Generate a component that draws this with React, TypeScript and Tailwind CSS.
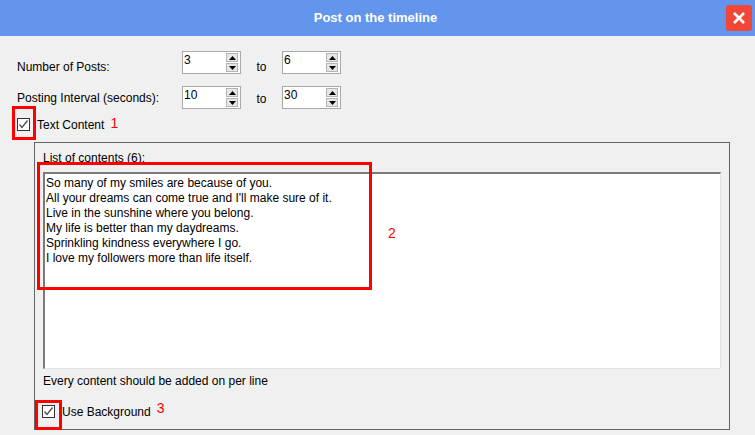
import React from "react"

const font = { fontFamily: '"Liberation Sans", Arial, sans-serif' }

const lines = [
  "So many of my smiles are because of you.",
  "All your dreams can come true and I'll make sure of it.",
  "Live in the sunshine where you belong.",
  "My life is better than my daydreams.",
  "Sprinkling kindness everywhere I go.",
  "I love my followers more than life itself.",
]

function SpinBox({ value }: { value: string }) {
  return (
    <div className="flex h-[23px] w-[59px] items-stretch border border-[#a9a9a9] bg-white">
      <div className="flex-1 pl-[1px] text-[12px] leading-[16px] text-black">{value}</div>
      <div className="flex flex-col gap-[1px] py-[1px] pr-[2px]">
        <div className="flex h-[9px] w-[12px] items-center justify-center border border-[#b5b5b5] bg-[#e6e6e6]">
          <svg width="7" height="4" viewBox="0 0 7 4">
            <path d="M3.5 0 L7 4 L0 4 Z" fill="#000" />
          </svg>
        </div>
        <div className="flex h-[9px] w-[12px] items-center justify-center border border-[#b5b5b5] bg-[#e6e6e6]">
          <svg width="7" height="4" viewBox="0 0 7 4">
            <path d="M0 0 L7 0 L3.5 4 Z" fill="#000" />
          </svg>
        </div>
      </div>
    </div>
  )
}

function CheckBox() {
  return (
    <div className="flex h-[13px] w-[13px] items-center justify-center border border-[#333333] bg-white">
      <svg width="11" height="11" viewBox="0 0 11 11">
        <path d="M1.5 5.5 L4 8.5 L9.5 1.5" fill="none" stroke="#4d4d4d" strokeWidth="1.3" />
      </svg>
    </div>
  )
}

export default function App() {
  return (
    <div className="relative h-[435px] w-[755px] overflow-hidden bg-[#f0f0f0]" style={font}>
      {/* Title bar */}
      <div className="relative flex h-[36px] items-center justify-center bg-[#6495ed]">
        <span className="-ml-[4px] text-[13px] font-bold text-white">Post on the timeline</span>
        <button className="absolute right-[3px] top-[5px] flex h-[26px] w-[26px] items-center justify-center rounded-[3px] bg-[#f24637]">
          <svg width="14" height="14" viewBox="0 0 14 14">
            <path d="M2 2 L12 12 M12 2 L2 12" stroke="#ffffff" strokeWidth="2.6" />
          </svg>
        </button>
      </div>

      {/* Settings rows */}
      <div className="flex flex-col gap-[12px] pl-[17px] pt-[15px]">
        <div className="flex h-[23px] items-center">
          <span className="w-[165px] pt-[9px] text-[12px] text-black">Number of Posts:</span>
          <SpinBox value="3" />
          <span className="w-[41px] pt-[9px] text-center text-[12px] text-black">to</span>
          <SpinBox value="6" />
        </div>
        <div className="flex h-[23px] items-center">
          <span className="w-[165px] pt-[1px] text-[12px] text-black">Posting Interval (seconds):</span>
          <SpinBox value="10" />
          <span className="w-[41px] pt-[2px] text-center text-[12px] text-black">to</span>
          <SpinBox value="30" />
        </div>
      </div>

      <div className="mt-[9px] flex h-[13px] items-center gap-[7px] pl-[17px]">
        <CheckBox />
        <span className="text-[12px] text-black">Text Content</span>
        <span className="-ml-[1px] -translate-y-[1px] text-[14px] text-[#ff0000]">1</span>
      </div>

      {/* Group box */}
      <div className="ml-[34px] mt-[11px] h-[288px] w-[696px] border border-[#646464] px-[8px]">
        <div className="pt-[8px] text-[12px] leading-[14px] text-black">List of contents (6):</div>
        <div className="mt-[7px] h-[197px] border-b border-l-2 border-r border-t-2 border-b-[#e3e3e3] border-l-[#7a7a7a] border-r-[#e3e3e3] border-t-[#7a7a7a] bg-white pl-[1px] pt-[2px]">
          {lines.map((l) => (
            <div key={l} className="text-[12px] leading-[15px] text-black">
              {l}
            </div>
          ))}
        </div>
        <div className="mt-[5px] text-[12px] leading-[14px] text-black">Every content should be added on per line</div>
        <div className="ml-[-1px] mt-[17px] flex h-[13px] items-center gap-[7px]">
          <CheckBox />
          <span className="text-[12px] text-black">Use Background</span>
          <span className="-ml-[1px] -translate-y-[3px] text-[14px] text-[#ff0000]">3</span>
        </div>
      </div>

      {/* Red annotation boxes */}
      <div className="pointer-events-none absolute left-[12px] top-[106px] h-[34px] w-[24px] border-[3px] border-[#ff0000]" />
      <div className="pointer-events-none absolute left-[37px] top-[162px] h-[128px] w-[335px] border-[3px] border-[#ff0000]" />
      <span className="pointer-events-none absolute left-[388px] top-[223px] text-[14px] text-[#ff0000]">2</span>
      <div className="pointer-events-none absolute left-[35px] top-[400px] h-[30px] w-[27px] border-[3px] border-[#ff0000]" />
    </div>
  )
}
